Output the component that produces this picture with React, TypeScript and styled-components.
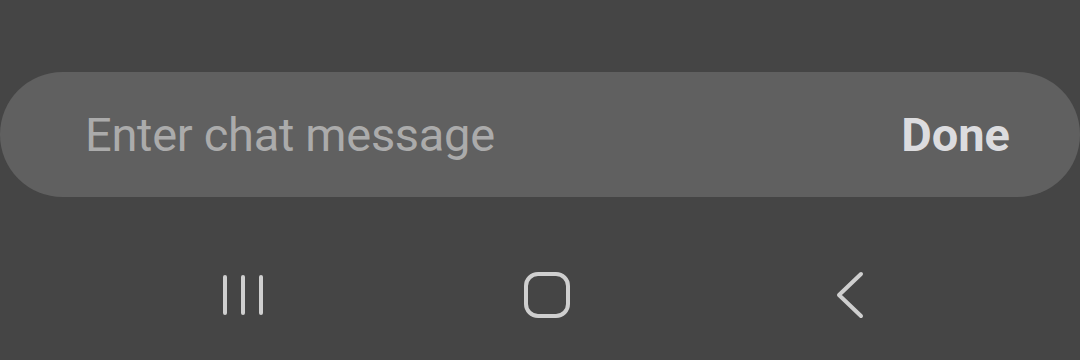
import React from "react";
import styled, { createGlobalStyle } from "styled-components";

const Global = createGlobalStyle`
  html, body { margin: 0; padding: 0; background: #454545; }
  #root { width: 1080px; height: 360px; }
`;

const Screen = styled.div`
  width: 1080px;
  height: 360px;
  background: #454545;
  display: flex;
  flex-direction: column;
  padding-top: 72px;
  box-sizing: border-box;
  font-family: Roboto, "Noto Sans", sans-serif;
`;

const InputBar = styled.div`
  height: 125px;
  border-radius: 62.5px;
  background: #606060;
  display: flex;
  align-items: center;
  justify-content: space-between;
  padding: 0 70px 0 85px;
  box-sizing: border-box;
`;

const Placeholder = styled.span`
  font-size: 47px;
  font-weight: 400;
  color: #ababab;
  letter-spacing: -0.3px;
  line-height: 1;
`;

const DoneButton = styled.span`
  font-size: 47px;
  font-weight: 700;
  color: #dcdcdf;
  line-height: 1;
`;

const NavBar = styled.div`
  flex: 1;
  display: grid;
  grid-template-columns: repeat(3, 1fr);
  align-items: center;
  justify-items: center;
  padding-top: 32px;
`;

const NavIcon = styled.svg`
  display: block;
  color: #cfcfcf;
`;

const NavSlot = styled.div<{ $shift: number }>`
  display: flex;
  justify-content: center;
  margin-left: ${(p) => p.$shift}px;
`;

export default function App() {
  return (
    <>
      <Global />
      <Screen>
        <InputBar>
          <Placeholder>Enter chat message</Placeholder>
          <DoneButton>Done</DoneButton>
        </InputBar>
        <NavBar>
          <NavSlot $shift={126}>
            <NavIcon width="44" height="44" viewBox="0 0 44 44" fill="none" stroke="currentColor" strokeWidth="4" strokeLinecap="round">
              <line x1="4" y1="4" x2="4" y2="40" />
              <line x1="22" y1="4" x2="22" y2="40" />
              <line x1="40" y1="4" x2="40" y2="40" />
            </NavIcon>
          </NavSlot>
          <NavSlot $shift={14}>
            <NavIcon width="46" height="46" viewBox="0 0 46 46" fill="none" stroke="currentColor" strokeWidth="4">
              <rect x="2" y="2" width="42" height="42" rx="12" />
            </NavIcon>
          </NavSlot>
          <NavSlot $shift={-100}>
            <NavIcon width="30" height="48" viewBox="0 0 30 48" fill="none" stroke="currentColor" strokeWidth="4" strokeLinecap="round" strokeLinejoin="round">
              <polyline points="26,3 4,24 26,45" />
            </NavIcon>
          </NavSlot>
        </NavBar>
      </Screen>
    </>
  );
}
